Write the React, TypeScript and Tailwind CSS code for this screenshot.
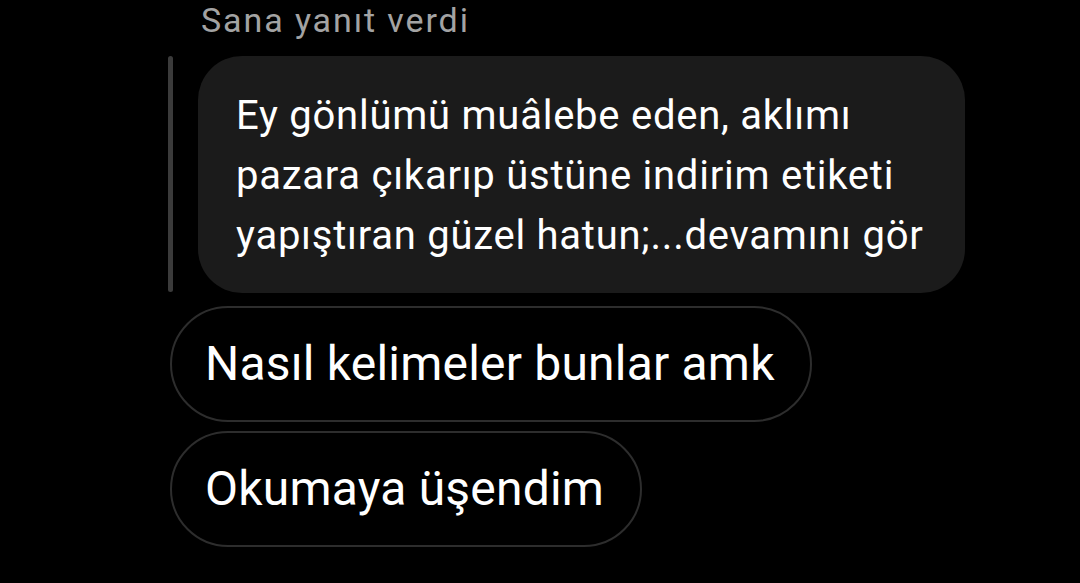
import React from "react";

const App: React.FC = () => {
  return (
    <div className="w-[1080px] h-[583px] bg-black overflow-hidden font-['Roboto',sans-serif]">
      <div className="pl-[168px]">

        {/* reply header */}
        <div className="pl-[33px] text-[34px] leading-[40px] tracking-[1.9px] text-[#a3a3a3]">
          Sana yanıt verdi
        </div>

        {/* quoted message */}
        <div className="flex gap-[25px] mt-[16px]">
          <div className="w-[5px] h-[236px] rounded-full bg-[#3b3b3b]" />
          <div className="w-[767px] h-[237px] rounded-[44px] bg-[#1b1b1b] pl-[38px] pt-[30px] text-[40px] leading-[60px] text-white tracking-[0.75px]">
            Ey gönlümü muâlebe eden, aklımı
            <br />
            pazara çıkarıp üstüne indirim etiketi
            <br />
            yapıştıran güzel hatun;...devamını gör
          </div>
        </div>

        {/* replies */}
        <div className="flex flex-col items-start gap-[9px] mt-[13px] pl-[2px]">
          <div className="h-[116px] rounded-full border-2 border-[#2d2d2d] pl-[33px] pr-[35px] flex items-center text-[48px] tracking-[0.2px] text-white">
            Nasıl kelimeler bunlar amk
          </div>
          <div className="h-[116px] rounded-full border-2 border-[#2d2d2d] pl-[33px] pr-[36px] flex items-center text-[48px] tracking-[0.2px] text-white">
            Okumaya üşendim
          </div>
        </div>

      </div>
    </div>
  );
};

export default App;
